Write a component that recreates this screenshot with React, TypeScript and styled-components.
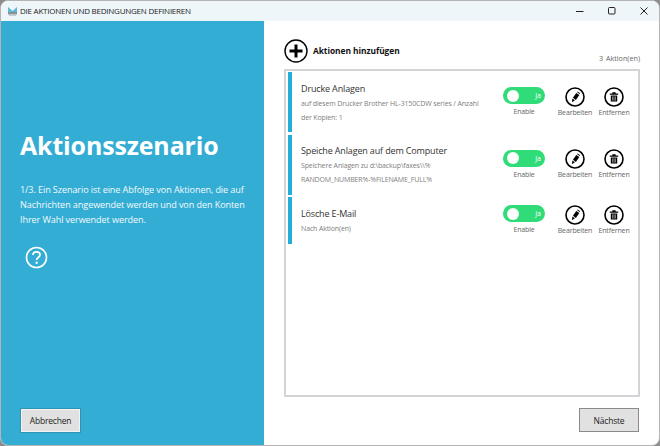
import React from "react";
import styled, { createGlobalStyle } from "styled-components";

const Global = createGlobalStyle`
  html, body { margin: 0; padding: 0; background: #8c8c8c; }
  body { font-family: "Open Sans", "Noto Sans", sans-serif; width: 660px; height: 446px; overflow: hidden; }
  * { box-sizing: border-box; }
`;

const Win = styled.div`
  width: 660px; height: 446px; display: flex; flex-direction: column;
  background: #fff; border: 1px solid #b4b4b4; border-radius: 8px; overflow: hidden;
`;
const TitleBar = styled.div`
  height: 20px; flex: none; background: #eff6fa; display: flex; align-items: center; padding-left: 6px; gap: 2px;
`;
const TitleText = styled.span`
  font-size: 8px; color: #222; letter-spacing: -0.03em; flex: 1; white-space: nowrap; line-height: 20px;
`;
const WinBtn = styled.span`
  width: 30px; height: 20px; flex: none; display: flex; align-items: center; justify-content: center; color: #222;
`;
const Body = styled.div`
  flex: 1; display: flex; min-height: 0;
`;
const Side = styled.aside`
  width: 263px; flex: none; background: #34add4; color: #fff; display: flex; flex-direction: column;
  padding: 106px 19px 13px 19px;
`;
const Heading = styled.h1`
  margin: 0; font-size: 24.9px; line-height: 36px; font-weight: 700; white-space: nowrap; letter-spacing: -0.1px;
`;
const Intro = styled.p`
  margin: 19px 0 0; font-size: 9.1px; line-height: 15px; width: 235px; color: #f2fafd; letter-spacing: -0.1px;
`;
const Help = styled.div`
  margin: 19px 0 0 5px; width: 23px; height: 23px;
`;
const Spacer = styled.div`flex: 1;`;
const Btn = styled.button`
  font-family: inherit; color: #222; background: #e1e1e1; font-size: 8.5px; letter-spacing: -0.2px; padding: 0;
  display: flex; align-items: center; justify-content: center; cursor: pointer;
`;
const CancelBtn = styled(Btn)`
  width: 59px; height: 23px; border: 1px solid #f4f4f4; box-shadow: 0 0 0 1px #3193b3; margin-left: 1px;
`;
const NextBtn = styled(Btn)`
  width: 60px; height: 24px; border: 1px solid #8a8a8a; align-self: flex-end; margin-right: 20px; margin-top: 11px;
`;
const Main = styled.main`
  flex: 1; min-width: 0; display: flex; flex-direction: column; padding: 16px 0 13px 20px;
`;
const AddRow = styled.div`
  display: flex; align-items: center; gap: 5px; height: 27px;
`;
const AddLabel = styled.span`
  font-size: 8.4px; font-weight: 700; color: #111; white-space: nowrap; letter-spacing: -0.05px;
`;
const Count = styled.div`
  font-size: 7.2px; color: #666; text-align: right; margin: -11px 19px 0 0; line-height: 10px; height: 9px; word-spacing: 1px;
`;
const ListBox = styled.div`
  flex: 1; margin-top: 7px; margin-right: 19px; border: 2px solid #d3d3d8; padding: 1px 2px; display: flex; flex-direction: column; gap: 2.5px; min-height: 0;
`;
const Row = styled.div<{ $h: number }>`
  height: ${p => p.$h}px; flex: none; display: flex; align-items: center; border-left: 4px solid #23add8; padding-left: 9px;
`;
const RowText = styled.div`
  width: 199px; flex: none; align-self: flex-start; padding-top: 8.5px;
`;
const RowTitle = styled.div`
  font-size: 9px; color: #333; line-height: 16px; white-space: nowrap; letter-spacing: -0.15px;
`;
const RowDesc = styled.div`
  font-size: 7px; line-height: 14px; color: #808080; letter-spacing: -0.02em; width: 182px;
`;
const Enable = styled.div`
  width: 44px; margin-left: 2px; display: flex; flex-direction: column; align-items: center;
`;
const Toggle = styled.div`
  width: 42px; height: 17px; border-radius: 9px; background: #2fdc78; position: relative; color: #fff; font-size: 7px; font-weight: 400;
  display: flex; align-items: center; justify-content: flex-end; padding-right: 4px;
`;
const Knob = styled.span`
  position: absolute; left: 4px; top: 2.5px; width: 12px; height: 12px; border-radius: 50%; background: #fff;
`;
const SmallLabel = styled.span`
  font-size: 7px; line-height: 10px; color: #666; margin-top: 3px; white-space: nowrap; letter-spacing: -0.02em;
`;
const Action = styled.div<{ $ml: number }>`
  width: 38px; margin-left: ${p => p.$ml}px; display: flex; flex-direction: column; align-items: center;
`;
const ActionIcon = styled.div`
  width: 20px; height: 20px;
`;
const ActionLabel = styled(SmallLabel)`
  margin-top: 1px;
`;

const Pencil = () => (
  <svg width="20" height="20" viewBox="0 0 20 20" fill="none">
    <circle cx="10" cy="10" r="9" stroke="#000" strokeWidth="1.6" />
    <path d="M11.3 5.9l3 2.1-3.4 4.9-3-2.1z" fill="#000" />
    <path d="M7.4 11.5l2.5 1.8-3 1.9z" fill="#000" />
    <path d="M12.6 4.4l2.6 1.9-.5.8-2.6-1.9z" fill="#000" />
  </svg>
);
const Trash = () => (
  <svg width="20" height="20" viewBox="0 0 20 20" fill="none">
    <circle cx="10" cy="10" r="9" stroke="#000" strokeWidth="1.6" />
    <path d="M5.8 6.6h8.4v1.2H5.8zM8.4 5.3h3.2v1.3H8.4z" fill="#000" />
    <path d="M6.8 8.6h6.4v5.8H6.8z" fill="#000" />
    <path d="M8.9 9.4v4.2M11.1 9.4v4.2" stroke="#fff" strokeWidth="0.8" />
  </svg>
);

const rows = [
  { h: 60, title: "Drucke Anlagen", desc: "auf diesem Drucker Brother HL-3150CDW series / Anzahl der Kopien: 1" },
  { h: 60, title: "Speiche Anlagen auf dem Computer", desc: <>Speichere Anlagen zu d:\backup\faxes\\%<br />RANDOM_NUMBER%-%FILENAME_FULL%</> },
  { h: 46.5, title: "Lösche E-Mail", desc: "Nach Aktion(en)" },
];

export default function App() {
  return (
    <Win>
      <Global />
      <TitleBar>
        <svg width="11" height="11" viewBox="0 0 11 11" style={{ flex: "none" }}>
          <path d="M1 1l4.5 4L10 1v5H1z" fill="#5fb6d6" />
          <path d="M1 6h9v2.5H1z" fill="#8a9299" />
          <path d="M2 8.5h7v1.5H2z" fill="#c5cbd0" />
        </svg>
        <TitleText>DIE AKTIONEN UND BEDINGUNGEN DEFINIEREN</TitleText>
        <WinBtn>
          <svg width="10" height="10" viewBox="0 0 10 10"><path d="M1 5.5h7.5" stroke="#222" strokeWidth="1" /></svg>
        </WinBtn>
        <WinBtn>
          <svg width="10" height="10" viewBox="0 0 10 10" fill="none"><rect x="1.5" y="1.5" width="6.5" height="6.5" rx="1" stroke="#222" strokeWidth="1" /></svg>
        </WinBtn>
        <WinBtn>
          <svg width="10" height="10" viewBox="0 0 10 10"><path d="M1.5 1.5l7 7M8.5 1.5l-7 7" stroke="#222" strokeWidth="1" /></svg>
        </WinBtn>
      </TitleBar>
      <Body>
        <Side>
          <Heading>Aktionsszenario</Heading>
          <Intro>1/3. Ein Szenario ist eine Abfolge von Aktionen, die auf Nachrichten angewendet werden und von den Konten Ihrer Wahl verwendet werden.</Intro>
          <Help>
            <svg width="23" height="23" viewBox="0 0 23 23" fill="none">
              <circle cx="11.5" cy="11.5" r="10" stroke="#fff" strokeWidth="1.6" />
              <path d="M8 9c0-2 1.6-3.2 3.5-3.2S15 7 15 8.8c0 2.6-3.4 2.7-3.4 5.2" stroke="#fff" strokeWidth="1.8" />
              <circle cx="11.6" cy="16.8" r="1.2" fill="#fff" />
            </svg>
          </Help>
          <Spacer />
          <CancelBtn>Abbrechen</CancelBtn>
        </Side>
        <Main>
          <AddRow>
            <svg width="24" height="24" viewBox="0 0 24 24" fill="none">
              <circle cx="12" cy="12" r="11" stroke="#000" strokeWidth="1.4" />
              <path d="M12 5.5v13M5.5 12h13" stroke="#000" strokeWidth="3" />
            </svg>
            <AddLabel>Aktionen hinzufügen</AddLabel>
          </AddRow>
          <Count>3 Aktion(en)</Count>
          <ListBox>
            {rows.map((r, i) => (
              <Row key={i} $h={r.h}>
                <RowText>
                  <RowTitle>{r.title}</RowTitle>
                  <RowDesc>{r.desc}</RowDesc>
                </RowText>
                <Enable>
                  <Toggle><Knob />Ja</Toggle>
                  <SmallLabel>Enable</SmallLabel>
                </Enable>
                <Action $ml={10}>
                  <ActionIcon><Pencil /></ActionIcon>
                  <ActionLabel>Bearbeiten</ActionLabel>
                </Action>
                <Action $ml={1}>
                  <ActionIcon><Trash /></ActionIcon>
                  <ActionLabel>Entfernen</ActionLabel>
                </Action>
              </Row>
            ))}
          </ListBox>
          <NextBtn>Nächste</NextBtn>
        </Main>
      </Body>
    </Win>
  );
}
